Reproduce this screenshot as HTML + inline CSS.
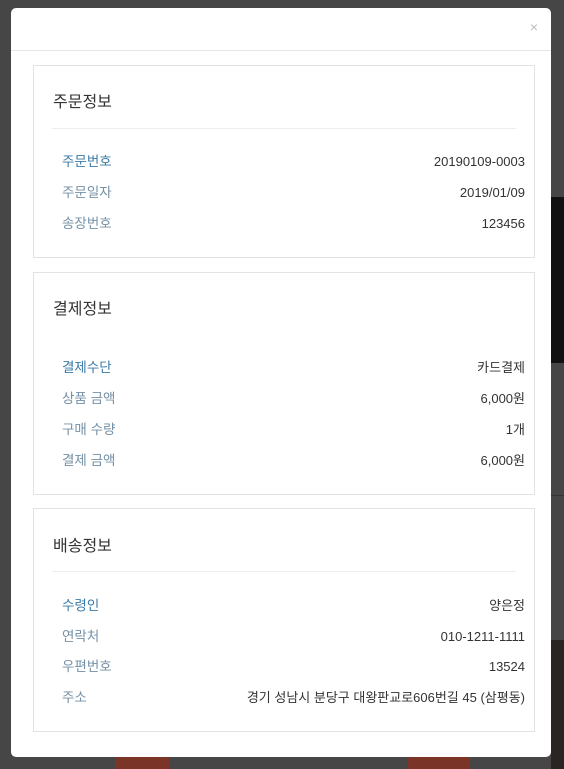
<!DOCTYPE html>
<html><head><meta charset="utf-8"><style>
body{margin:0;width:564px;height:769px;overflow:hidden;background:#464646;position:relative;font-family:"Liberation Sans","Noto Sans CJK KR",sans-serif;}
.a{position:absolute}
.modal{left:11px;top:8px;width:540px;height:749px;background:#fff;border-radius:5px}
.hd{left:0;top:42px;width:540px;height:1px;background:#e5e5e5}
.card{position:absolute;left:22px;width:500px;border:1px solid #e3e3e3;background:#fff}
.t{position:absolute;left:19px;font-size:16px;line-height:20px;color:#333}
.dv{position:absolute;left:18px;width:464px;height:1px;background:#eee}
.l{position:absolute;left:28px;font-size:13.5px;line-height:16px;color:#7590a6}
.l.b{color:#3a7aa6}
.v{position:absolute;right:9px;font-size:13px;line-height:16px;color:#333}
</style></head><body>
<div class="a" style="left:551px;top:197px;width:13px;height:166px;background:#111"></div>
<div class="a" style="left:551px;top:495px;width:13px;height:1px;background:#333"></div>
<div class="a" style="left:551px;top:640px;width:13px;height:129px;background:#2a2522"></div>
<div class="a" style="left:115px;top:757px;width:55px;height:12px;background:#7a3428"></div>
<div class="a" style="left:408px;top:757px;width:62px;height:12px;background:#7a3428"></div>
<div class="a modal">
<div class="a hd"></div>
<div class="a" style="right:13px;top:11px;font-size:14px;color:#bbb">×</div>
<div class="card" style="top:57px;height:191px">
<div class="t" style="top:27px">주문정보</div>
<div class="dv" style="top:62px"></div>
<div class="l b" style="top:88px">주문번호</div><div class="v" style="top:88px">20190109-0003</div>
<div class="l" style="top:119px">주문일자</div><div class="v" style="top:119px">2019/01/09</div>
<div class="l" style="top:150px">송장번호</div><div class="v" style="top:150px">123456</div>
</div>
<div class="card" style="top:264px;height:221px">
<div class="t" style="top:27px">결제정보</div>
<div class="l b" style="top:87px">결제수단</div><div class="v" style="top:87px">카드결제</div>
<div class="l" style="top:118px">상품 금액</div><div class="v" style="top:118px">6,000원</div>
<div class="l" style="top:149px">구매 수량</div><div class="v" style="top:149px">1개</div>
<div class="l" style="top:180px">결제 금액</div><div class="v" style="top:180px">6,000원</div>
</div>
<div class="card" style="top:500px;height:222px">
<div class="t" style="top:28px">배송정보</div>
<div class="dv" style="top:62px"></div>
<div class="l b" style="top:89px">수령인</div><div class="v" style="top:89px">양은정</div>
<div class="l" style="top:120px">연락처</div><div class="v" style="top:120px">010-1211-1111</div>
<div class="l" style="top:150px">우편번호</div><div class="v" style="top:150px">13524</div>
<div class="l" style="top:181px">주소</div><div class="v" style="top:181px">경기 성남시 분당구 대왕판교로606번길 45 (삼평동)</div>
</div>
</div>
</body></html>
